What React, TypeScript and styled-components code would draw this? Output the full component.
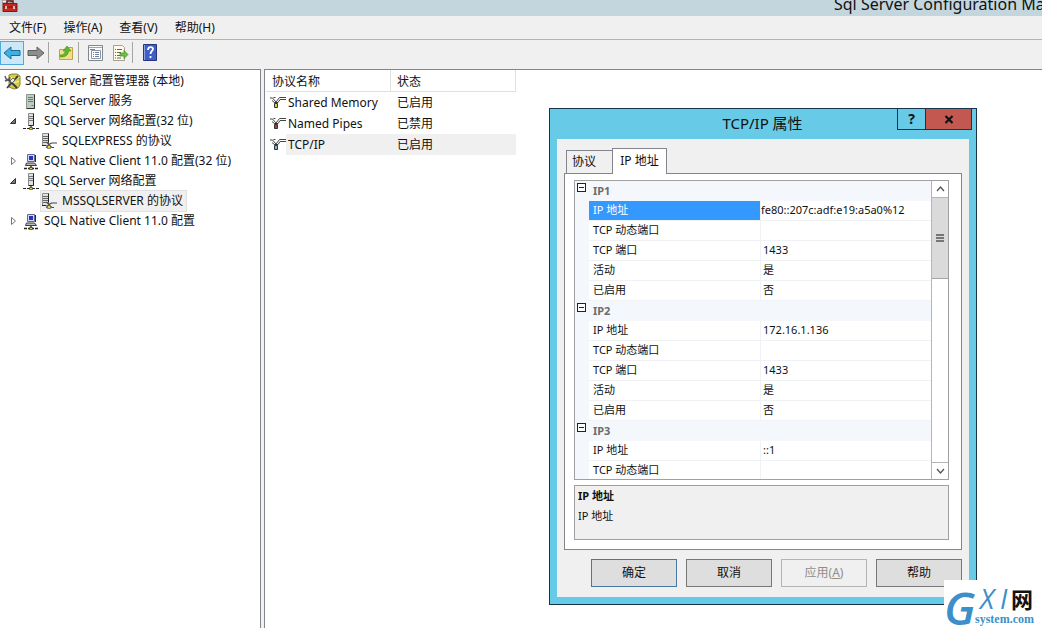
import React from "react";
import styled, { createGlobalStyle } from "styled-components";

const Global = createGlobalStyle`
  * { box-sizing: border-box; }
  html, body, #root { height: 100%; margin: 0; }
  body { overflow: hidden; background: #fff; color: #111; font: 12px/20px "Noto Sans", "Noto Sans CJK SC", sans-serif; }
  button { font: inherit; color: inherit; padding: 0; margin: 0; border: 0; background: none; }
`;

const Screen = styled.div`
  position: relative;
  display: flex;
  flex-direction: column;
  height: 100%;
  overflow: hidden;
`;
const TitleBar = styled.header`
  display: flex;
  justify-content: space-between;
  height: 16px;
  flex: none;
  background: #c3d5dd;
  overflow: hidden;
  padding-left: 2px;
`;
const AppTitle = styled.h1`
  margin: 0;
  width: 208px;
  white-space: nowrap;
  font-size: 16px;
  font-weight: 400;
  line-height: 8px;
`;
const MenuBar = styled.nav`
  display: flex;
  gap: 17px;
  height: 24px;
  flex: none;
  padding-left: 9px;
  background: #f0f0f0;
  border-bottom: 1px solid #b0b4b4;
`;
const MenuItem = styled.button`
  line-height: 23px;
`;
const ToolBar = styled.div`
  display: flex;
  align-items: center;
  height: 29px;
  flex: none;
  background: #f0f0f0;
  padding-bottom: 4px;
`;
const Tool = styled.button<{ $active?: boolean }>`
  display: grid;
  place-items: center;
  width: 24px;
  height: 24px;
  && {
    border: 1px solid ${(p) => (p.$active ? "#52a9dc" : "transparent")};
    background: ${(p) => (p.$active ? "#cbe8f8" : "transparent")};
  }
`;
const Divider = styled.span`
  width: 1px;
  height: 21px;
  margin-right: 5px;
  background: #a5a5a5;
`;
const Body = styled.div`
  display: flex;
  flex: 1;
  gap: 3px;
  background: #f0f0f0;
  min-height: 0;
`;
const TreePane = styled.aside`
  width: 261px;
  flex: none;
  padding-top: 1px;
  background: #fff;
  border: solid #82858c;
  border-width: 1px 1px 0 0;
`;
const Tree = styled.ul`
  list-style: none;
  margin: 0;
  padding: 0;
`;
const Node = styled.li<{ $level: number }>`
  display: flex;
  align-items: center;
  height: 20px;
  padding-left: ${(p) => [4, 9, 41][p.$level]}px;
  white-space: nowrap;
`;
const Arrow = styled.span`
  display: flex;
  width: 14px;
`;
const NodeLabel = styled.span<{ $selected?: boolean; $root?: boolean }>`
  display: flex;
  align-items: center;
  gap: ${(p) => (p.$root ? 4 : 5)}px;
  height: 20px;
  padding-right: 3px;
  background: ${(p) => (p.$selected ? "#f0f0f0" : "transparent")};
  outline: ${(p) => (p.$selected ? "1px solid #e0e0e0" : "none")};
`;
const ListPane = styled.main`
  flex: 1;
  min-width: 0;
  background: #fff;
  border: solid #82858c;
  border-width: 1px 0 0 1px;
  padding-left: 1px;
`;
const List = styled.table`
  border-collapse: separate;
  border-spacing: 0;
  table-layout: fixed;
  width: 250px;
  th, td { text-align: left; font-weight: 400; padding: 0 0 0 6px; height: 21px; white-space: nowrap; }
  th { height: 22px; padding-top: 2px; line-height: 19px; border-right: 1px solid #e0e0e0; border-bottom: 1px solid #e0e0e0; }
  th:first-child { width: 125px; }
`;
const Row = styled.tr<{ $selected?: boolean }>`
  td { background: ${(p) => (p.$selected ? "#f0f0f0" : "transparent")}; }
  td:first-child { padding-left: 4px; background: ${(p) => (p.$selected ? "linear-gradient(90deg, #fff 20px, #f0f0f0 20px)" : "transparent")}; }
`;
const Protocol = styled.span`
  display: flex;
  align-items: center;
  gap: 2px;
`;

const Dialog = styled.section`
  position: absolute;
  left: 549px;
  top: 108px;
  width: 428px;
  display: flex;
  flex-direction: column;
  background: #67cbe8;
  border: 1px solid #17344a;
  padding: 0 7px 7px;
`;
const DialogHead = styled.header`
  display: grid;
  grid-template-columns: 1fr auto 1fr;
  height: 30px;
  margin-right: -3px;
`;
const DialogTitle = styled.h2`
  grid-column: 2;
  margin: 0;
  padding-right: 4px;
  font-size: 15px;
  font-weight: 400;
  line-height: 29px;
`;
const Caption = styled.div`
  display: flex;
  justify-self: end;
  height: 21px;
`;
const CaptionButton = styled.button<{ $close?: boolean }>`
  display: grid;
  place-items: center;
  width: ${(p) => (p.$close ? 46 : 29)}px;
  font-size: 14px;
  font-weight: 700;
  && {
    border: solid #17344a;
    border-width: 0 1px 1px ${(p) => (p.$close ? 0 : 1)}px;
    background: ${(p) => (p.$close ? "#c35850" : "transparent")};
  }
`;
const DialogBody = styled.div`
  background: #f0f0f0;
  padding: 9px 7px 10px;
`;
const Tabs = styled.div`
  display: flex;
  align-items: flex-end;
  padding-left: 2px;
`;
const Tab = styled.button<{ $active?: boolean }>`
  width: ${(p) => (p.$active ? 55 : 46)}px;
  height: ${(p) => (p.$active ? 26 : 23)}px;
  padding-left: ${(p) => (p.$active ? 0 : 5)}px;
  text-align: ${(p) => (p.$active ? "center" : "left")};
  line-height: 20px;
  && {
    padding-bottom: ${(p) => (p.$active ? 2 : 0)}px;
    border: 1px solid #82858c;
    border-width: 1px ${(p) => (p.$active ? 1 : 0)}px 0 1px;
    background: ${(p) => (p.$active ? "#fff" : "#f0f0f0")};
    margin-bottom: ${(p) => (p.$active ? -1 : 0)}px;
  }
  z-index: 1;
`;
const Page = styled.div`
  display: flex;
  flex-direction: column;
  gap: 5px;
  padding: 6px 12px 9px 9px;
  background: #fff;
  border: 1px solid #82858c;
`;
const GridFrame = styled.div`
  display: flex;
  height: 300px;
  border: 1px solid #a0a0a0;
  overflow: hidden;
  font-size: 11px;
`;
const Props = styled.table`
  flex: 1;
  border-collapse: separate;
  border-spacing: 0;
  table-layout: fixed;
  width: 100%;
  th, td { padding: 0; height: 20px; line-height: 16px; text-align: left; font-weight: 400; white-space: nowrap; }
`;
const Gutter = styled.td`
  width: 14px;
  background: #f4f7fc;
  vertical-align: top;
`;
const Category = styled.th`
  background: #f4f7fc;
  && { font-weight: 700; padding-left: 4px; color: #6d6d6d; }
`;
const Key = styled.th<{ $selected?: boolean }>`
  width: 172px;
  && { padding: 0 0 2px 4px; }
  border: solid #f0f2f6;
  border-width: 0 1px 1px 0;
  color: ${(p) => (p.$selected ? "#fff" : "inherit")};
  background: ${(p) => (p.$selected ? "#3399ff" : "#fff")};
`;
const Value = styled.td<{ $selected?: boolean }>`
  && { padding: 0 0 2px ${(p) => (p.$selected ? 0 : 2)}px; }
  border-bottom: 1px solid #f0f2f6;
`;
const Expander = styled.button`
  display: grid;
  place-items: center;
  width: 9px;
  height: 9px;
  && { margin: 2px 0 0 2px; border: 1px solid #222; background: #fff; }
  &::after { content: ""; width: 5px; height: 1px; background: #222; }
`;
const ScrollBar = styled.div`
  display: flex;
  flex-direction: column;
  width: 17px;
  flex: none;
  border-left: 1px solid #b5b5b5;
  background: #fff;
`;
const ScrollArrow = styled.button`
  display: grid;
  place-items: center;
  height: 16px;
`;
const Track = styled.div`
  flex: 1;
  border: solid #b5b5b5;
  border-width: 1px 0;
`;
const Thumb = styled.div`
  display: grid;
  place-items: center;
  height: 81px;
  background: #dadada;
  border-bottom: 1px solid #a5a5a5;
`;
const HelpBox = styled.div`
  height: 55px;
  padding: 0 3px;
  font-size: 11px;
  background: #f0f0f0;
  border: 1px solid #a0a0a0;
  p { margin: 0; }
`;
const Buttons = styled.div`
  display: flex;
  justify-content: flex-end;
  gap: 9px;
  padding-top: 9px;
`;
const Action = styled.button<{ $primary?: boolean }>`
  width: 86px;
  height: 28px;
  && {
    border: 1px solid ${(p) => (p.$primary ? "#4878a0" : "#777")};
    background: #dedede;
  }
  &&:disabled { color: #8e8e8e; background: #f0f0f0; border-color: #b4b4b4; }
`;
const Watermark = styled.div`
  position: absolute;
  right: 0;
  bottom: 0;
  width: 98px;
  height: 48px;
  background: #fff;
  svg { display: block; overflow: visible; }
`;

function ServerIcon({ variant }: { variant: "plain" | "net" | "proto" | "client" | "root" }) {
  if (variant === "root")
    return (
      <svg width="17" height="17" viewBox="0 0 17 17">
        <path d="M5 2l3-1h5l3 2v9l-2 3-4 1-5-2z" fill="#d5cc45" stroke="#8b8430" />
        <path d="M6 4c2 2 6 2 9 0M6 8c2 2 6 2 9 0" fill="none" stroke="#f4ec92" strokeWidth="1.500" />
        <path d="M3 15l9-10M12 5l2-2M4 6l9 9" fill="none" stroke="#3a3b40" strokeWidth="1.800" />
        <path d="M1 3l1 3 3 1 1-3M1 8l3-1" fill="none" stroke="#55575e" strokeWidth="1.400" />
        <path d="M6 8l3-3 2 2-3 3z" fill="#eee" stroke="#555" strokeWidth=".8" />
      </svg>
    );
  if (variant === "client")
    return (
      <svg width="16" height="17" viewBox="0 0 16 17">
        <path d="M4.500 1.500h7v7h-7z" fill="#d9d9ee" stroke="#66688a" />
        <path d="M12.500 2v7" stroke="#2b2c3a" />
        <path d="M6 3h4v4H6z" fill="#1d35c8" />
        <path d="M3.500 10h8l2 2.500h-11z" fill="#b9bbc6" stroke="#3a3b48" />
        <path d="M8 13v2M1 15.500h3M5 15.500h6M12 15.500h3" stroke="#222" strokeWidth="1.400" />
        <path d="M6.500 14.500h3v2h-3z" fill="#e2d43a" stroke="#222" strokeWidth=".6" />
      </svg>
    );
  return (
    <svg width="16" height="17" viewBox="0 0 16 17">
      {variant === "plain" && (
        <>
          <path d="M3.500 1.500h8v14h-8z" fill="#bccdbf" stroke="#8d9a90" />
          <path d="M5 4.500h5M5 6.500h5M5 8.500h5" stroke="#6d7c72" />
          <path d="M11.500 1.500v14h-8" stroke="#2d332f" fill="none" />
          <path d="M8.500 12.500h2" stroke="#25a72a" />
        </>
      )}
      {variant === "net" && (
        <>
          <path d="M5.500.500h5v12h-5z" fill="#dfe2e0" stroke="#8b8d8c" />
          <path d="M6 3.500h4M6 5.500h4M6 7.500h4" stroke="#777" />
          <path d="M10.500.500v12h-5" stroke="#222" fill="none" />
          <path d="M8 12v3M0 15.500h3M4 15.500h8M13 15.500h3" stroke="#222" strokeWidth="1.200" />
          <path d="M6.500 14.500h3v2h-3z" fill="#e2d43a" stroke="#222" strokeWidth=".6" />
        </>
      )}
      {variant === "proto" && (
        <>
          <path d="M1.500.500h6v12h-6z" fill="#dfe2e0" stroke="#8b8d8c" />
          <path d="M2 3.500h5M2 5.500h5M2 7.500h5M2 9.500h4" stroke="#666" />
          <path d="M7.500.500v9M1 12.500h4" stroke="#222" />
          <path d="M5.500 9l2.500 2.500L10.500 10H16M5 14.500l3-2 3 2h2" stroke="#444" strokeWidth="1.200" fill="none" />
          <path d="M6.500 12.500h3v3h-3z" fill="#e2d43a" stroke="#444" strokeWidth=".6" />
        </>
      )}
    </svg>
  );
}

function ProtocolIcon({ color }: { color: string }) {
  return (
    <svg width="16" height="16" viewBox="0 0 16 16">
      <path d="M0 3h2.500L6 7M2 5.500L5 8M3.500 2.500h2M16 2.500H9.500L6 7M16 4.500h-6L8 7.500" fill="none" stroke="#444" />
      <path d="M4.500 8.500h3v4h-3z" fill={color} stroke="#333" />
      <path d="M5 7.500h3" stroke="#333" />
    </svg>
  );
}

const BlockArrow = ({ back }: { back?: boolean }) => (
  <svg width="18" height="16" viewBox="0 0 18 16">
    {back ? (
      <path d="M1 8l7-6V5.500h9v5H8V14z" fill="#3fb0e6" stroke="#24688f" />
    ) : (
      <path d="M17 8l-7-6V5.500H1v5h9V14z" fill="#8d8d8d" stroke="#5f5f5f" />
    )}
  </svg>
);

const Tri = ({ open }: { open: boolean }) => (
  <svg width="8" height="10" viewBox="0 0 8 10">
    {open ? <path d="M6.500 2.500v5h-5z" fill="#777" stroke="#333" /> : <path d="M2.500 1.500v7L6.500 5z" fill="#fff" stroke="#777" />}
  </svg>
);

type TreeRow = { level: number; icon: "plain" | "net" | "proto" | "client" | "root"; text: string; open?: boolean; selected?: boolean };
const tree: TreeRow[] = [
  { level: 0, icon: "root", text: "SQL Server 配置管理器 (本地)" },
  { level: 1, icon: "plain", text: "SQL Server 服务" },
  { level: 1, icon: "net", text: "SQL Server 网络配置(32 位)", open: true },
  { level: 2, icon: "proto", text: "SQLEXPRESS 的协议" },
  { level: 1, icon: "client", text: "SQL Native Client 11.0 配置(32 位)", open: false },
  { level: 1, icon: "net", text: "SQL Server 网络配置", open: true },
  { level: 2, icon: "proto", text: "MSSQLSERVER 的协议", selected: true },
  { level: 1, icon: "client", text: "SQL Native Client 11.0 配置", open: false },
];

const protocols = [
  { name: "Shared Memory", state: "已启用", color: "#d9cf3c" },
  { name: "Named Pipes", state: "已禁用", color: "#c8322b" },
  { name: "TCP/IP", state: "已启用", color: "#7fb6d8", selected: true },
];

const groups = [
  { name: "IP1", rows: [["IP 地址", "fe80::207c:adf:e19:a5a0%12"], ["TCP 动态端口", ""], ["TCP 端口", "1433"], ["活动", "是"], ["已启用", "否"]] },
  { name: "IP2", rows: [["IP 地址", "172.16.1.136"], ["TCP 动态端口", ""], ["TCP 端口", "1433"], ["活动", "是"], ["已启用", "否"]] },
  { name: "IP3", rows: [["IP 地址", "::1"], ["TCP 动态端口", ""]] },
];

export default function App() {
  return (
    <Screen>
      <Global />
      <TitleBar>
        <svg width="16" height="14" viewBox="0 0 16 14">
          <path d="M0 0h9v3H0z" fill="#f2f2f2" stroke="#777" />
          <path d="M5 3V1h6v2" fill="none" stroke="#6b1410" strokeWidth="1.500" />
          <path d="M1 3.500h14v8H1z" fill="#c8281e" stroke="#8c1510" />
          <path d="M1 7h14" stroke="#7a120d" />
          <path d="M4 6v3M12 6v3" stroke="#eee" strokeWidth="1.500" />
        </svg>
        <AppTitle>Sql Server Configuration Manager</AppTitle>
      </TitleBar>
      <MenuBar>
        {["文件(F)", "操作(A)", "查看(V)", "帮助(H)"].map((m) => (
          <MenuItem key={m}>{m}</MenuItem>
        ))}
      </MenuBar>
      <ToolBar>
        <Tool $active aria-label="后退"><BlockArrow back /></Tool>
        <Tool aria-label="前进"><BlockArrow /></Tool>
        <Divider />
        <Tool aria-label="上一级">
          <svg width="16" height="16" viewBox="0 0 16 16">
            <path d="M1.500 4.500h7l1.500-2h4.500v12h-13z" fill="#f3df86" stroke="#bfa24a" />
            <path d="M2 10c4 0 5-2 5-4H5l4-5 4 5h-2.500c0 4-3 6-8 6z" fill="#62b52e" stroke="#4a8f22" strokeWidth=".6" />
          </svg>
        </Tool>
        <Divider />
        <Tool aria-label="属性">
          <svg width="16" height="16" viewBox="0 0 16 16">
            <path d="M.500.500h14v15H.500z" fill="#fbfbfb" stroke="#7f8791" />
            <path d="M1 2.500h13" stroke="#9aa7b6" />
            <path d="M3.500 5.500h9v8h-9z" fill="#fff" stroke="#8a97a8" />
            <path d="M2 4.500h5M5 7.500h1M7 7.500h4M5 9.500h1M7 9.500h4M5 11.500h1M7 11.500h4" stroke="#6f839c" />
          </svg>
        </Tool>
        <Tool aria-label="导出列表">
          <svg width="17" height="16" viewBox="0 0 17 16">
            <path d="M1.500.500h9l2 2v13h-11z" fill="#fdfbe8" stroke="#a5a38e" />
            <path d="M3 4.500h1M5 4.500h5M3 7.500h1M5 7.500h4M3 10.500h1M5 10.500h4M3 13h1M5 13h4" stroke="#666" />
            <path d="M8 8h4V5.500L16 9.500 12 13.500V11H8z" fill="#6cc240" stroke="#3c8c1c" strokeWidth=".7" />
          </svg>
        </Tool>
        <Divider />
        <Tool aria-label="帮助">
          <svg width="14" height="17" viewBox="0 0 14 17">
            <path d="M.500.500h13v16H.500z" fill="#3f5fc4" stroke="#26357c" />
            <path d="M1.500 1v15" stroke="#8ea2e6" />
            <path d="M5 6c0-4 5-3.500 5-1 0 2-2.500 2-2.500 5M7.500 12v2" fill="none" stroke="#fff" strokeWidth="1.800" />
          </svg>
        </Tool>
      </ToolBar>
      <Body>
        <TreePane>
          <Tree>
            {tree.map((n) => (
              <Node key={n.text} $level={n.level}>
                {n.level === 1 && <Arrow>{n.open !== undefined && <Tri open={n.open} />}</Arrow>}
                <NodeLabel $selected={n.selected} $root={n.level === 0}>
                  <ServerIcon variant={n.icon} />
                  {n.text}
                </NodeLabel>
              </Node>
            ))}
          </Tree>
        </TreePane>
        <ListPane>
          <List>
            <thead>
              <tr><th>协议名称</th><th>状态</th></tr>
            </thead>
            <tbody>
              {protocols.map((p) => (
                <Row key={p.name} $selected={p.selected}>
                  <td><Protocol><ProtocolIcon color={p.color} />{p.name}</Protocol></td>
                  <td>{p.state}</td>
                </Row>
              ))}
            </tbody>
          </List>
        </ListPane>
      </Body>

      <Dialog role="dialog" aria-label="TCP/IP 属性">
        <DialogHead>
          <DialogTitle>TCP/IP 属性</DialogTitle>
          <Caption>
            <CaptionButton>?</CaptionButton>
            <CaptionButton $close aria-label="关闭">
              <svg width="10" height="9" viewBox="0 0 10 9"><path d="M1.500 1l7 7M8.500 1l-7 7" stroke="#111" strokeWidth="2.200" /></svg>
            </CaptionButton>
          </Caption>
        </DialogHead>
        <DialogBody>
          <Tabs role="tablist">
            <Tab role="tab">协议</Tab>
            <Tab role="tab" $active>IP 地址</Tab>
          </Tabs>
          <Page>
            <GridFrame>
              <Props>
                <colgroup>
                  <col width="14" />
                  <col width="172" />
                  <col />
                </colgroup>
                <tbody>
                  {groups.map((g) => (
                    <React.Fragment key={g.name}>
                      <tr>
                        <Gutter><Expander aria-label={g.name} /></Gutter>
                        <Category colSpan={2}>{g.name}</Category>
                      </tr>
                      {g.rows.map(([k, v], i) => {
                        const selected = g.name === "IP1" && i === 0;
                        return (
                          <tr key={k}>
                            <Gutter />
                            <Key $selected={selected}>{k}</Key>
                            <Value $selected={selected}>{v}</Value>
                          </tr>
                        );
                      })}
                    </React.Fragment>
                  ))}
                </tbody>
              </Props>
              <ScrollBar>
                <ScrollArrow aria-label="向上"><svg width="9" height="6" viewBox="0 0 9 6"><path d="M1 5l3.500-4L8 5" fill="none" stroke="#555" strokeWidth="1.300" /></svg></ScrollArrow>
                <Track>
                  <Thumb><svg width="8" height="8" viewBox="0 0 8 8"><path d="M0 1h8M0 4h8M0 7h8" stroke="#555" strokeWidth="1.500" /></svg></Thumb>
                </Track>
                <ScrollArrow aria-label="向下"><svg width="9" height="6" viewBox="0 0 9 6"><path d="M1 1l3.500 4L8 1" fill="none" stroke="#555" strokeWidth="1.300" /></svg></ScrollArrow>
              </ScrollBar>
            </GridFrame>
            <HelpBox>
              <p><b>IP 地址</b></p>
              <p>IP 地址</p>
            </HelpBox>
          </Page>
          <Buttons>
            <Action $primary>确定</Action>
            <Action>取消</Action>
            <Action disabled>应用(<u>A</u>)</Action>
            <Action>帮助</Action>
          </Buttons>
        </DialogBody>
      </Dialog>

      <Watermark>
        <svg width="98" height="48" viewBox="0 0 98 48" role="img" aria-label="GXI网 system.com">
          <text x="0" y="45" fontFamily="Open Sans" fontStyle="italic" fontWeight="600" fontSize="46" fill="#3c8fc8">G</text>
          <text x="36" y="29" fontFamily="Open Sans" fontStyle="italic" fontWeight="500" fontSize="27" fill="#3c8fc8">X</text>
          <text x="56" y="29" fontFamily="Open Sans" fontStyle="italic" fontWeight="500" fontSize="27" fill="#3c8fc8">I</text>
          <text x="67" y="28" fontFamily="Noto Sans CJK SC" fontWeight="700" fontSize="22" fill="#111">网</text>
          <text x="31" y="43" fontFamily="Liberation Serif" fontWeight="700" fontSize="12" fill="#3c8fc8">system.com</text>
        </svg>
      </Watermark>
    </Screen>
  );
}
